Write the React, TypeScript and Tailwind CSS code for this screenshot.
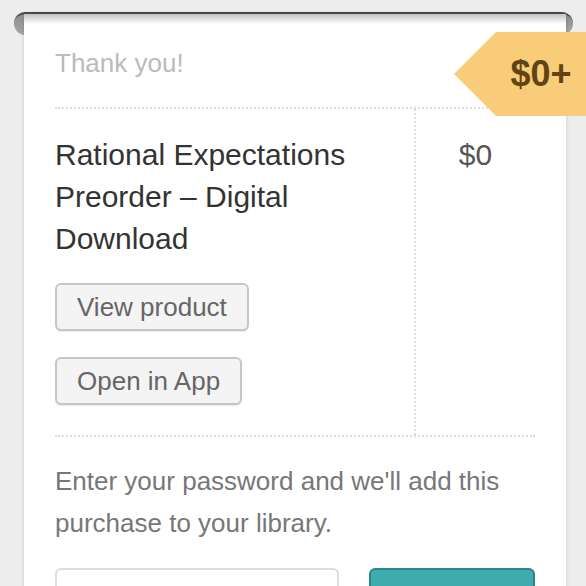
import React from "react";

export default function App() {
  return (
    <div className="relative w-[586px] h-[586px] overflow-hidden bg-[#ededed] font-['Liberation_Sans',Arial,Helvetica,sans-serif]">
      {/* printer slot bar */}
      <div className="absolute left-[14px] top-[12px] w-[559px] h-[23px] rounded-full border-t-2 border-[#4a4a4a] bg-gradient-to-b from-[#8c8c8c] to-[#a8a8a8]" />
      {/* receipt card */}
      <div className="relative z-10 mt-[14px] ml-[24px] w-[542px] h-[600px] bg-white px-[31px] pt-[31px] shadow-[0_0_4px_rgba(0,0,0,0.16)]">
        <div className="absolute left-0 right-0 top-0 h-[10px] bg-gradient-to-b from-[#c2c2c2] to-white" />
        <div className="relative text-[26px] leading-[36px] text-[#bbbbbb] pb-[26px]">Thank you!</div>
        <div className="flex border-t-2 border-dotted border-[#dddddd]">
          <div className="w-[359px] pt-[25px] pb-[30px] pr-[20px]">
            <div className="text-[30px] leading-[42px] text-[#333333]">
              Rational Expectations Preorder – Digital Download
            </div>
            <div className="mt-[23px] flex flex-col items-start gap-[26px]">
              <button className="h-[48px] px-[20px] rounded-[6px] border-2 border-[#c6c6c6] bg-[#f4f4f4] text-[26px] leading-[44px] text-[#666666] shadow-[0_1px_1px_rgba(0,0,0,0.08)]">
                View product
              </button>
              <button className="h-[48px] px-[20px] rounded-[6px] border-2 border-[#c6c6c6] bg-[#f4f4f4] text-[26px] leading-[44px] text-[#666666] shadow-[0_1px_1px_rgba(0,0,0,0.08)]">
                Open in App
              </button>
            </div>
          </div>
          <div className="flex-1 border-l-2 border-dotted border-[#dddddd] pt-[25px] text-center">
            <div className="text-[30px] leading-[42px] text-[#555555]">$0</div>
          </div>
        </div>
        <div className="border-t-2 border-dotted border-[#dddddd]" />
        <p className="mt-[23px] text-[26px] leading-[42px] text-[#777777]">
          Enter your password and we'll add this purchase to your library.
        </p>
        <div className="mt-[24px] flex gap-[30px]">
          <div className="w-[284px] h-[60px] rounded-[6px] border-2 border-[#dddddd] bg-white" />
          <div className="flex-1 h-[60px] rounded-[6px] border-2 border-[#2c8587] bg-[#3eabaf]" />
        </div>
      </div>
      {/* price ribbon */}
      <div className="absolute z-20 left-[454px] top-[32px] w-[132px] h-[84px] bg-[#f9cc79] [clip-path:polygon(42px_0,100%_0,100%_100%,42px_100%,0_50%)] flex items-center">
        <div className="ml-[42px] flex-1 text-center text-[36px] font-bold leading-none text-[#604413]">$0+</div>
      </div>
    </div>
  );
}
